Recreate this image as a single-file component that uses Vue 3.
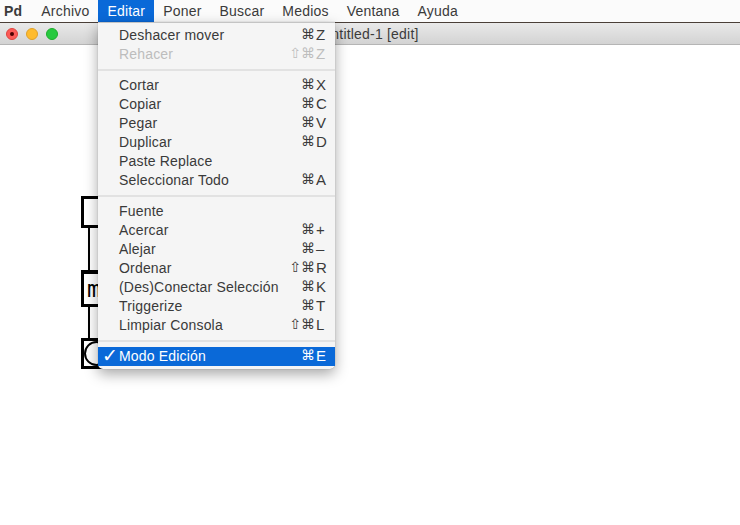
<template>
  <div class="desktop">
    <div class="menubar">
      <div
        v-for="item in menuTitles"
        :key="item"
        :class="['title', { app: item === 'Pd', open: item === 'Editar' }]"
      >
        {{ item }}
      </div>
    </div>

    <div class="window">
      <div class="titlebar">
        <span class="light red"><i></i></span>
        <span class="light yellow"></span>
        <span class="light green"></span>
        <span class="wintitle">Untitled-1 [edit]</span>
      </div>
      <div class="canvas">
        <div class="wire wire-a"></div>
        <div class="wire wire-b"></div>
        <div class="node node-a"></div>
        <div class="node node-b">m</div>
        <div class="node node-c"><div class="bang"></div></div>
      </div>
    </div>

    <div class="menu">
      <template v-for="(group, g) in groups" :key="g">
        <div v-if="g > 0" class="sep"></div>
        <div
          v-for="row in group"
          :key="row.label"
          :class="['row', { off: row.off, sel: row.sel }]"
        >
          <span class="check">{{ row.sel ? '✓' : '' }}</span>
          <span class="label">{{ row.label }}</span>
          <span v-if="row.key" class="mods">{{ row.mods || '⌘' }}</span>
          <span v-if="row.key" class="key">{{ row.key }}</span>
        </div>
      </template>
    </div>
  </div>
</template>

<script setup>
const menuTitles = ['Pd', 'Archivo', 'Editar', 'Poner', 'Buscar', 'Medios', 'Ventana', 'Ayuda']

const groups = [
  [
    { label: 'Deshacer mover', key: 'Z' },
    { label: 'Rehacer', key: 'Z', mods: '⇧⌘', off: true }
  ],
  [
    { label: 'Cortar', key: 'X' },
    { label: 'Copiar', key: 'C' },
    { label: 'Pegar', key: 'V' },
    { label: 'Duplicar', key: 'D' },
    { label: 'Paste Replace' },
    { label: 'Seleccionar Todo', key: 'A' }
  ],
  [
    { label: 'Fuente' },
    { label: 'Acercar', key: '+' },
    { label: 'Alejar', key: '–' },
    { label: 'Ordenar', key: 'R', mods: '⇧⌘' },
    { label: '(Des)Conectar Selección', key: 'K' },
    { label: 'Triggerize', key: 'T' },
    { label: 'Limpiar Consola', key: 'L', mods: '⇧⌘' }
  ],
  [{ label: 'Modo Edición', key: 'E', sel: true }]
]
</script>

<style>
html, body {
  margin: 0;
  background: #fff;
}
</style>

<style scoped>
.desktop {
  position: relative;
  width: 740px;
  height: 525px;
  overflow: hidden;
  background: #fff;
  font-family: "Liberation Sans", Arial, sans-serif;
  font-size: 14px;
  color: #3a3a3a;
}
.menubar {
  display: flex;
  height: 22px;
  background: #fbfbfb;
  border-bottom: 1px solid #4a3f38;
}
.title {
  padding: 0 9px;
  line-height: 22px;
  letter-spacing: 0.2px;
}
.title.app {
  padding: 0 10px 0 4px;
  font-weight: bold;
}
.title.open {
  background: #0a69d8;
  color: #fff;
}
.titlebar {
  position: relative;
  display: flex;
  align-items: center;
  gap: 8px;
  height: 22px;
  box-sizing: border-box;
  padding: 1px 0 0 6px;
  background: linear-gradient(#e9e9e9, #d3d3d3);
  border-bottom: 1px solid #b5b5b5;
}
.light {
  display: flex;
  align-items: center;
  justify-content: center;
  width: 12px;
  height: 12px;
  border-radius: 50%;
  box-sizing: border-box;
}
.light.red { background: #fc5b57; border: 1px solid #e0443e; }
.light.red i { width: 4px; height: 4px; border-radius: 50%; background: #4d0000; }
.light.yellow { background: #febb2e; border: 1px solid #e0a028; }
.light.green { background: #27c93f; border: 1px solid #1dad2b; }
.wintitle {
  position: absolute;
  left: 321px;
  top: 4px;
  line-height: 15px;
  font-size: 14px;
  letter-spacing: 0.2px;
  color: #3c3c3c;
}
.canvas {
  position: relative;
  height: 480px;
}
.node {
  position: absolute;
  left: 81px;
  width: 40px;
  box-sizing: border-box;
  background: #fff;
  border: 3px solid #000;
}
.node-a { top: 151px; height: 32px; }
.node-b {
  top: 225px;
  height: 37px;
  border-top-width: 4px;
  font-family: "DejaVu Sans Mono", monospace;
  font-size: 23px;
  line-height: 30px;
  padding-left: 3px;
  color: #000;
}
.node-c { top: 293px; height: 31px; }
.bang {
  width: 25px;
  height: 25px;
  border: 2px solid #000;
  border-radius: 50%;
  box-sizing: border-box;
}
.wire {
  position: absolute;
  left: 88px;
  width: 2px;
  background: #000;
}
.wire-a { top: 183px; height: 42px; }
.wire-b { top: 262px; height: 31px; }
.menu {
  position: absolute;
  left: 98px;
  top: 22px;
  width: 237px;
  height: 347px;
  box-sizing: border-box;
  padding-top: 3px;
  background: #f5f5f5;
  border-top: 1px solid #c4c4c4;
  border-radius: 0 0 5px 5px;
  box-shadow: 0 5px 14px rgba(0, 0, 0, 0.35), 0 0 1px rgba(0, 0, 0, 0.4);
}
.row {
  display: flex;
  align-items: center;
  height: 19px;
  box-sizing: border-box;
  padding: 0 9px 2px 0;
  color: #3a3a3a;
  letter-spacing: 0.18px;
}
.row.off { color: #bdbdbd; }
.row.sel { background: #0a69d8; color: #fff; }
.check {
  width: 21px;
  padding-left: 4px;
  box-sizing: border-box;
  font-family: "DejaVu Sans", sans-serif;
  font-size: 19px;
  font-weight: bold;
  line-height: 17px;
  letter-spacing: 0;
  white-space: nowrap;
}
.label { flex: 1; }
.mods {
  font-family: "DejaVu Sans", sans-serif;
  font-size: 14px;
  letter-spacing: 0;
  line-height: 17px;
  margin-right: 1px;
}
.key {
  width: 10px;
  font-size: 15px;
  letter-spacing: 0;
  line-height: 17px;
}
.sep {
  height: 2px;
  margin: 5px 0;
  background: #e2e2e2;
}
</style>
